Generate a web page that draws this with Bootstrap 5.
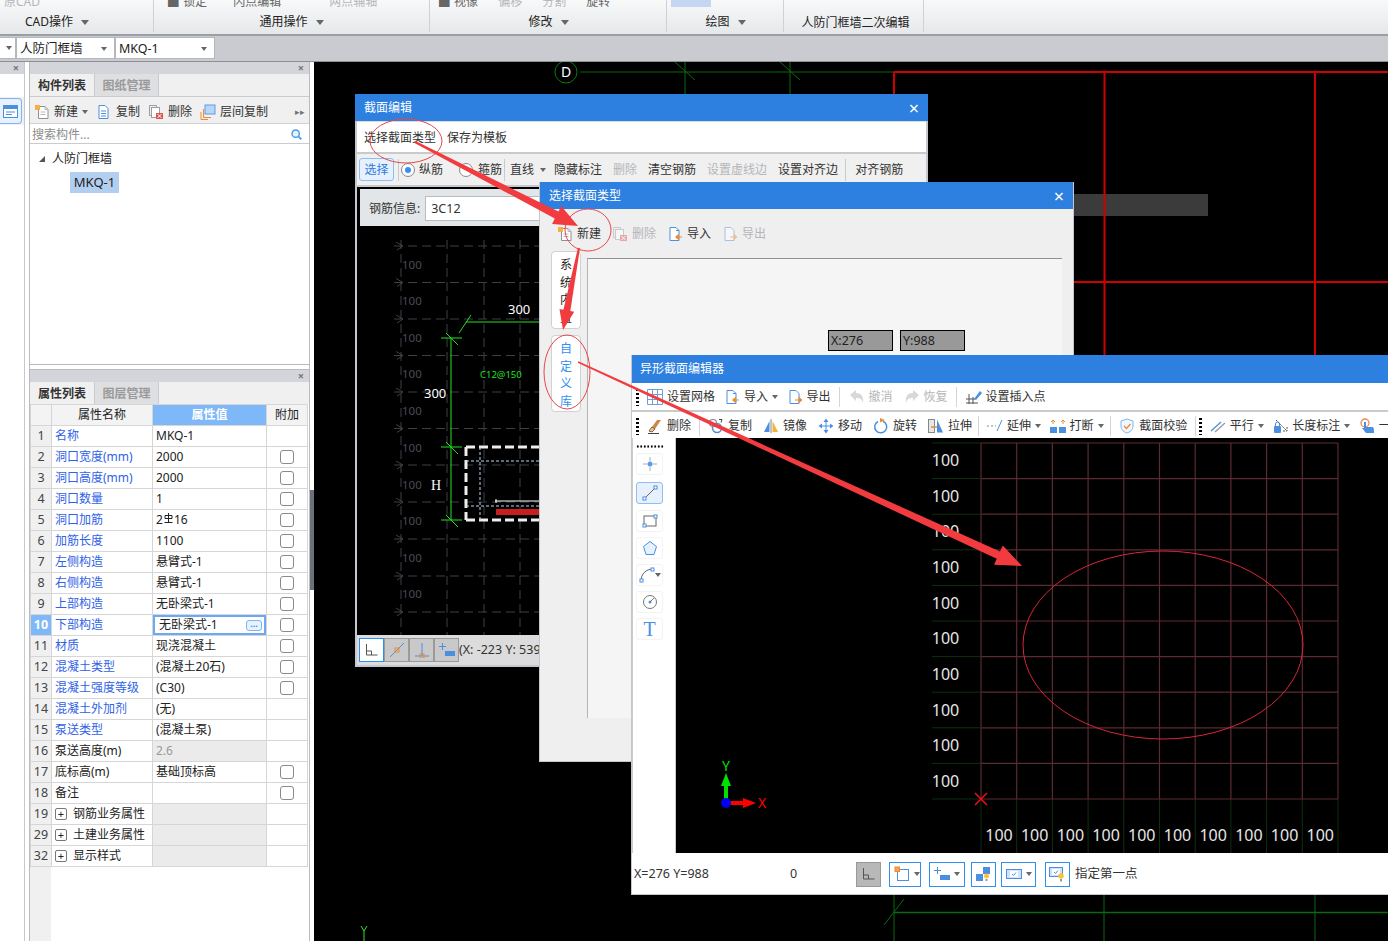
<!DOCTYPE html>
<html lang="zh-CN">
<head>
<meta charset="UTF-8">
<title>人防门框墙</title>
<link rel="stylesheet" href="https://cdn.jsdelivr.net/npm/bootstrap@5.3.3/dist/css/bootstrap.min.css">
<style>
html,body{margin:0;height:941px;overflow:hidden}
body{position:relative;width:1388px;font:12px/16px "Noto Sans","Noto Sans CJK SC",sans-serif;color:#333;background:#fff}
svg{display:block;flex:none}
.ic{width:16px;height:16px}
.off{color:#b4b6b9}
.off .ic{opacity:.45}
.caret-d{width:0;height:0;border:3px solid transparent;border-top:4px solid #666;border-bottom:0;flex:none}

/* ribbon */
.ribbon{height:36px;background:linear-gradient(#f8f9f9,#e5e8ea);border-bottom:2px solid #9b9ea2;overflow:hidden}
.rb-group{height:32px;border-right:1px solid #cfd2d5;position:relative}
.rb-top{height:7px;overflow:hidden;align-items:flex-end;color:#666;white-space:nowrap}
.rb-top span{line-height:14px;margin-bottom:-2px}
.rb-top .t1{padding-left:14px}.rb-top .t2{padding-left:26px}.rb-top .t3{padding-left:48px}
.rb-top .t4{padding-left:9px}.rb-top .t5{padding-left:20px}
.rb-label{height:20px;color:#222;margin-top:5px}
.rb-label .caret-d{border-width:4px;border-top-width:5px;border-bottom-width:0}
.g1{width:154px}.g2{width:276px}.g3{width:237px}.g4{width:117px}.g5{width:140px}
.g1 .rb-label{padding-left:25px}
.g2 .rb-label{padding-left:0}
.g3 .rb-label{padding-left:1px}
.g4 .rb-label{padding-left:1px}
.g5 .rb-label{padding:2px 0 0 4px}
.tool-blue{width:40px;height:10px;background:#c5d7f0;margin-top:-3px}

/* selector bar */
.selbar{height:26px;background:#c9cbd0;border-bottom:1px solid #8c8f94;padding-top:1px}
.combo{height:22px;background:#fff;border:1px solid #b5b7bb;padding:1px 7px 0 3px;color:#222;font-size:12.5px}
.combo-a{width:16px;padding:0 3px 0 0;border-left:0}
.combo-b{width:99px}
.combo-c{width:100px}

/* left dock */
.dock{height:879px}
.strip{width:25px;border-right:1px solid #c6c8cb}
.dock-head{height:12px;background:#d3d5da;color:#777;font-size:11px;line-height:11px;text-align:right;padding-right:5px;font-weight:700}
.strip-btn{width:24px;height:28px;background:#eef0f2;margin-top:23px;padding-top:1px}
.strip-ico{width:22px;height:26px;border:1px solid #7eb5f5;border-left:0;border-radius:0 4px 4px 0;background:#e8f2fe}
.side{width:281px;margin-left:4px;border-left:1px solid #b9bbbe;border-right:1px solid #b9bbbe}
.tabs-row{height:23px;background:#f0f0f0;border-bottom:1px solid #c9cbce}
.tabs-row-2{height:22px;border-bottom:0}
.tab-on{width:64px;line-height:24px;text-align:center;font-weight:700;color:#333;background:#f0f0f0}
.tab-off{width:65px;line-height:24px;text-align:center;font-weight:700;color:#9a9a9a;background:#dedfe1;border-left:1px solid #c9cbce;border-right:1px solid #c9cbce}
.list-tools{height:27px;background:#f0f0f0;border-bottom:1px solid #d0d2d4;padding:3px 0 0 4px;gap:8px}
.tool{display:flex;align-items:center;gap:4px;white-space:nowrap}
.more-mark{font-size:9px}
.search-row{height:20px;border-bottom:1px solid #c9cbce;padding:2px 6px 0 2px;color:#8d8d8d}
.tree{height:221px;border-bottom:1px solid #b9bbbe;padding-top:4px;color:#222}
.tree-root{height:22px}
.tree-tri{width:0;height:0;border-bottom:6px solid #555;border-left:6px solid transparent;margin:0 7px 0 9px}
.tree-leaf{width:49px;height:21px;line-height:20px;background:#b3cff0;text-align:center;margin:2px 0 0 40px;font-size:13px}
.dock-gap{height:5px;border-bottom:1px solid #b9bbbe}
.split{width:4px;background:#fff}
.split-handle{height:100px;margin-top:428px;background:#6c7079}

/* property grid */
.prop-grid{width:277px;table-layout:fixed;border-color:#d6d6d6;margin:0;font-size:12px;color:#222}
.prop-grid .c-num{width:21px}.prop-grid .c-name{width:101px}.prop-grid .c-val{width:114px}.prop-grid .c-add{width:41px}
.prop-grid td,.prop-grid th{height:21px;padding:0 3px;line-height:20px;white-space:nowrap;overflow:hidden;font-weight:400;vertical-align:middle;border-color:#d6d6d6}
.prop-grid th{text-align:center;background:#f3f3f3}
.prop-grid td.num{background:#f0f0f0;text-align:center;padding:0;color:#444;font-size:12.5px}
.prop-grid th.val-head{background:#7eb8f8;color:#fff;font-weight:700}
.prop-grid td.num-on{background:#7eb8f8;color:#fff;font-weight:700}
.prop-grid .link-name{color:#2f62e6}
.prop-grid td.val-gray{background:#ebebeb;color:#999}
.prop-grid td.val-edit{padding:0}
.val-box{height:20px;padding:0 4px 0 6px;box-shadow:inset 0 0 0 2px #6aaaf5}
.dots-btn{width:16px;height:11px;border:1px solid #7eb5f5;border-radius:3px;background:#e8f2fe;color:#4a8fe0;font-size:9px;line-height:6px;text-align:center;font-weight:700}
.prop-grid .form-check-input{width:14px;height:14px;margin:3px 0 0;border:1px solid #8a8a8a;border-radius:3px;float:none}
.plus-box{width:12px;height:12px;border:1px solid #777;border-radius:2px;font-size:11px;line-height:10px;text-align:center;margin:0 6px 0 0;flex:none}
.steel{display:inline-block;vertical-align:1px;margin:0 1px}
.grid-tail{height:80px;width:21px;background:#f0f0f0}

/* cad */
.cad{flex:1;background:#000;position:relative;overflow:hidden}
.cad-bg{position:absolute;left:0;top:0}

/* floating windows */
.win{position:absolute;display:flex;flex-direction:column;background:#efefef;border:1px solid #c5c8cf;border-top:0}
.win-1{left:355px;top:94px;width:573px;height:573px;z-index:2;border-width:0 2px 2px 2px}
.win-2{left:539px;top:182px;width:535px;height:580px;z-index:3}
.win-3{left:631px;top:355px;width:757px;height:540px;z-index:4;border-right:0}
.win-title{height:27px;background:#2d7fe0;color:#fff;padding:0 9px;flex:none;font-size:12px}
.win-1 .win-title{margin:0 -2px}
.win-3 .win-title{height:28px;padding-left:8px}
.win-close{font-size:18px;color:#fff}
.bar-white{background:#fff;flex:none;border-bottom:2px solid #c8cacc}
.w1-bar1{height:33px;padding:1px 0 0 7px;gap:11px;border-top:1px solid #ddd;color:#333}
.w1-bar2{height:33px;background:#f0f0f0;padding-left:2px;border-bottom:2px solid #c8cacc;flex:none;color:#333}
.w1-bar2 .m2{margin-left:2px}.w1-bar2 .m4{margin-left:4px}.w1-bar2 .m5{margin-left:5px}.w1-bar2 .m16{margin-left:16px}
.w1-bar2 .m6{margin-left:6px}.w1-bar2 .m7{margin-left:7px}.w1-bar2 .m8{margin-left:8px}.w1-bar2 .m9{margin-left:9px}.w1-bar2 .m11{margin-left:11px}
.sel-btn{width:35px;height:23px;line-height:21px;text-align:center;color:#2f7be0;border:1px solid #8dbdf3;border-radius:3px;background:#e6f1fd}
.sep{width:1px;height:22px;background:#c8cacc;flex:none}
.radio-dot{width:14px;height:14px;border-radius:50%;border:1px solid #888;background:#fff;flex:none;position:relative}
.radio-on::after{content:"";position:absolute;left:3px;top:3px;width:6px;height:6px;border-radius:50%;background:#3b8cf0}
.info-wrap{background:#000;padding:2px 0 0 3px;flex:none;height:39px}
.info-bar{height:37px;background:#e2e6e8;padding:2px 0 0 9px;gap:5px;color:#333}
.info-input{width:200px;height:25px;line-height:23px;background:#fff;border:1px solid #b9bbbe;padding-left:5px;font-size:12.5px}
.w1-canvas{height:409px;background:#000;flex:none;overflow:hidden}
.w1-status{height:30px;background:#dcdcdc;padding-left:2px;flex:none;font-size:12.5px;white-space:nowrap;overflow:hidden}
.st-btn{width:25px;height:24px;background:#c9c9c9;border:1px solid #9a9a9a;flex:none}
.st-on{background:#fff;border:1px solid #2f8ff0}

.w2-tools{height:49px;padding-left:17px;gap:11px;flex:none}
.w2-main{flex:1;padding-left:11px;gap:6px;min-height:0}
.side-tabs{width:30px;gap:6px;margin-top:-7px}
.side-tab{border:1px solid #cfd1d3;border-radius:4px;background:#fff;height:78px;text-align:center;line-height:17.5px;padding-top:4px;overflow:hidden;color:#222}
.side-tab-on{color:#2f8ff0;height:77px}
.w2-pane{width:475px;height:460px;background:#f5f5f5;border-top:1px solid #8d9198;border-left:1px solid #b4b6ba}
.coord-row{padding:71px 0 0 240px;gap:7px}
.coord{width:65px;height:21px;line-height:19px;background:#999;border:1px solid #000;padding-left:2px;color:#222;font-size:12.5px}

.w3-bar{height:29px;padding:1px 0 0 4px;color:#333}
.w3-bar-2{height:26px;border-bottom:0}
.tb-btn{display:flex;align-items:center;gap:4px;padding:0 5.5px;white-space:nowrap}
.tb-btn .caret-d{margin-right:-2.5px}
.tb-tight{margin-right:-2px}
.tb-sep{width:1px;height:20px;background:#d3d5d7;flex:none;margin:0 2.500px}
.tb-sep-wide{margin:0 3px}
.tb-dots{width:3px;height:18px;flex:none;background:radial-gradient(circle,#000 1.4px,transparent 1.5px) 0 0/3px 4px repeat-y;margin-right:2.500px}
.w3-main{height:415px;flex:none}
.w3-tools{width:44px;background:#fff;border-left:1px solid #c8cacc;border-right:1px solid #c8cacc;padding:7px 0 0 3px;gap:5px}
.drag-dots{width:28px;height:3px;background:radial-gradient(circle,#000 1px,transparent 1.2px) 0 0/3.5px 3px repeat-x}
.pick{width:27px;height:22px;border:1px solid #f3f3f3;border-radius:3px}
.pick-on{background:#e6f1fd;border-color:#8dbdf3;margin:2px 0 1px}
.pick-t{font:20px/20px "Liberation Serif",serif;color:#4a8fe0}
.w3-canvas{flex:1;background:#000;overflow:hidden}
.w3-status{flex:1;background:#fff;padding:1px 0 0 2px;color:#333;font-size:12.5px}
.s-num{width:156px}
.s-zero{width:66px}
.s-btn{height:25px;border:1px solid #2f8ff0;background:#fff;flex:none;padding:0 4px}
.s-btn-grey{background:#b8b8b8;border-color:#999;width:25px;margin-right:8px}
.s-a{width:32px;margin-right:8px}
.s-b{width:36px;margin-right:6px}
.s-c{width:25px;padding:0 3px;margin-right:5px}
.s-d{width:35px;margin-right:9px}
.s-e{width:25px;padding:0 3px;margin-right:5px}
.overlay{position:absolute;left:0;top:0;z-index:9;pointer-events:none}
</style>
</head>
<body>

<svg width="0" height="0" class="position-absolute">
  <symbol id="i-new" viewBox="0 0 16 16"><path d="M4.500 2.500h6.500l3 3v9h-9.500z" fill="#fff" stroke="#8c9196"/><path d="M11 2.500v3h3M6.500 8h5M6.500 10.500h5" fill="none" stroke="#b5b8bb"/><rect x="1" y="1" width="5" height="5" fill="#f5b042"/></symbol>
  <symbol id="i-copy" viewBox="0 0 16 16"><path d="M3 1.500h6l3 3v10H3z" fill="#fff" stroke="#4a8fe0"/><path d="M5 7h5M5 9.500h5M5 12h5" stroke="#4a8fe0"/></symbol>
  <symbol id="i-del" viewBox="0 0 16 16"><path d="M1.500 1.500h7v2M1.500 1.500v10h2" fill="none" stroke="#9a9ea2"/><rect x="3.500" y="3.500" width="8" height="10" fill="#fff" stroke="#9a9ea2"/><rect x="8" y="9" width="7" height="6" fill="#d9534f"/><path d="M9.500 10l4 4M13.500 10l-4 4" stroke="#fff"/></symbol>
  <symbol id="i-floor" viewBox="0 0 16 16"><rect x="5" y="1" width="10" height="9" fill="#b9d6f7" stroke="#5a9be6"/><path d="M3.500 5v8.500H11M1 8v7.500h7" fill="none" stroke="#ee8a2f"/></symbol>
  <symbol id="i-import" viewBox="0 0 16 16"><path d="M3 1.500h6l3 3v10H3z" fill="#fff" stroke="#4a8fe0"/><path d="M9 4.500h3" stroke="#4a8fe0"/><path d="M15 11H9M11.500 8.500L8.500 11l3 2.500z" stroke="#ee8a2f" fill="#ee8a2f"/></symbol>
  <symbol id="i-export" viewBox="0 0 16 16"><path d="M3 1.500h6l3 3v10H3z" fill="#fff" stroke="#4a8fe0"/><path d="M8 11h5M12 8.500l3 2.500-3 2.500z" stroke="#ee8a2f" fill="#ee8a2f"/></symbol>
  <symbol id="i-grid" viewBox="0 0 16 16"><path d="M.5.500h15v15H.5zM5.500.500v15M10.500.500v15M.5 5.500h15M.5 10.500h15" fill="none" stroke="#6a9fdc"/></symbol>
  <symbol id="i-undo" viewBox="0 0 16 16"><path d="M1 6l6-5v3c5 0 8 3 7 10-1-4-3-5-7-5v3z" fill="#a8abae"/></symbol>
  <symbol id="i-redo" viewBox="0 0 16 16"><path d="M15 6L9 1v3c-5 0-8 3-7 10 1-4 3-5 7-5v3z" fill="#a8abae"/></symbol>
  <symbol id="i-ins" viewBox="0 0 16 16"><path d="M3 5v10M7 8v7M0 10h9M0 14h12" stroke="#555"/><path d="M8 10l6-8 2 2-6 7z" fill="#4a8fe0"/></symbol>
  <symbol id="i-erase" viewBox="0 0 16 16"><path d="M10 2l4 0-6 9-3-2z" fill="#c98a4a"/><path d="M5 9l3 2-3 3-3-1z" fill="#e9c9a5" stroke="#8a5a2a"/><path d="M1 15.500h11" stroke="#444"/></symbol>
  <symbol id="i-chain" viewBox="0 0 16 16"><circle cx="9" cy="10" r="4.500" fill="none" stroke="#4a8fe0" stroke-width="1.500"/><circle cx="5" cy="5" r="3.500" fill="none" stroke="#888" stroke-width="1.200"/><path d="M11 1.500h3l-1 3" fill="none" stroke="#444"/></symbol>
  <symbol id="i-mirror" viewBox="0 0 16 16"><path d="M6.500 3L1 14h5.500z" fill="#4a8fe0"/><path d="M9.500 3L15 14H9.500z" fill="#f2b233"/><path d="M8 1v14" stroke="#888"/></symbol>
  <symbol id="i-move" viewBox="0 0 16 16"><path d="M8 3v10M3 8h10" stroke="#4a8fe0"/><path d="M8 .5L5.500 4h5zM8 15.500L5.500 12h5zM.5 8L4 5.500v5zM15.500 8L12 5.500v5z" fill="#4a8fe0"/></symbol>
  <symbol id="i-rotate" viewBox="0 0 16 16"><path d="M10 3.300A6 6 0 1 1 5 3.500" fill="none" stroke="#4a8fe0" stroke-width="1.500"/><path d="M7 0l5 2-5 2.500z" fill="#ee8a2f"/></symbol>
  <symbol id="i-stretch" viewBox="0 0 16 16"><rect x=".5" y="1.500" width="6" height="13" fill="#e4e6e8" stroke="#888"/><path d="M9 1.500l6 13H9z" fill="#4a8fe0"/><path d="M3 9h6" stroke="#ee8a2f" stroke-width="1.500"/></symbol>
  <symbol id="i-extend" viewBox="0 0 16 16"><path d="M0 8h9" stroke="#888" stroke-dasharray="2 2"/><path d="M10 13L15 2" stroke="#4a8fe0"/></symbol>
  <symbol id="i-break" viewBox="0 0 16 16"><rect x="0" y="9" width="7" height="6" fill="#4a8fe0"/><rect x="9" y="9" width="7" height="6" fill="#4a8fe0"/><path d="M3 6V2M13 6V2M1 4l2-2 2 2M11 4l2-2 2 2" fill="none" stroke="#ee8a2f"/></symbol>
  <symbol id="i-shield" viewBox="0 0 16 16"><path d="M8 1l6 2v5c0 4-3 6-6 7-3-1-6-3-6-7V3z" fill="#f4f8fd" stroke="#7eb5f5"/><path d="M5 8l2.500 2.500L11.500 6" fill="none" stroke="#ee8a2f" stroke-width="1.300"/></symbol>
  <symbol id="i-par" viewBox="0 0 16 16"><path d="M1 13L11 4" stroke="#4a8fe0" stroke-width="1.300"/><path d="M5 14L15 5" stroke="#999" stroke-width="1.300"/></symbol>
  <symbol id="i-len" viewBox="0 0 16 16"><rect x="2" y="8" width="7" height="7" rx="1" fill="#4a8fe0"/><path d="M3.500 8V6a2 2 0 0 1 4 0v2" fill="none" stroke="#4a8fe0"/><path d="M4 2l11 11M11 13l4 0 0-4" fill="none" stroke="#555" stroke-dasharray="2 1"/></symbol>
  <symbol id="i-hand" viewBox="0 0 16 16"><circle cx="6" cy="5" r="4" fill="none" stroke="#ee8a5f" stroke-width="1.300"/><path d="M5 4h2v5h6c2 0 2 2 2 6H7L3 10h2z" fill="#4a8fe0"/></symbol>
  <symbol id="i-search" viewBox="0 0 16 16"><circle cx="7" cy="7" r="4.500" fill="#e6f1fd" stroke="#4a9be6" stroke-width="1.800"/><path d="M10.500 10.500L14 14" stroke="#4a9be6" stroke-width="2.200"/></symbol>
  <symbol id="i-ortho" viewBox="0 0 16 16"><path d="M2.500 2v11h11M2.500 9h5v4" fill="none" stroke="#555"/></symbol>
  <symbol id="i-snap" viewBox="0 0 16 16"><rect x="3.500" y="3.500" width="11" height="11" fill="none" stroke="#4a8fe0"/><rect x="1" y="1" width="4.500" height="4.500" fill="#f2a25b" stroke="#ee8a2f"/></symbol>
  <symbol id="i-plusbar" viewBox="0 0 16 16"><path d="M3.500 1v7M0 4.500h7" stroke="#4a8fe0"/><rect x="6" y="9" width="10" height="5" fill="#4a8fe0"/></symbol>
  <symbol id="i-bulb" viewBox="0 0 16 16"><rect x="1" y="8" width="7" height="7" fill="#4a8fe0"/><rect x="8" y="1" width="7" height="7" fill="#4a8fe0"/><circle cx="11.500" cy="10" r="2.500" fill="#f5c542"/><path d="M10.500 13h2v2h-2z" fill="#999"/></symbol>
  <symbol id="i-form" viewBox="0 0 16 16"><rect x=".5" y="3.500" width="15" height="9" fill="#cfe2f8" stroke="#4a8fe0"/><rect x="4" y="5" width="8" height="6" fill="#fff"/><path d="M6 8l1.500 1.500L10 6.500" fill="none" stroke="#4a8fe0"/></symbol>
  <symbol id="i-formbulb" viewBox="0 0 16 16"><rect x=".5" y="1.500" width="13" height="9" fill="#cfe2f8" stroke="#4a8fe0"/><rect x="3" y="3" width="8" height="6" fill="#fff"/><path d="M5 6l1.500 1.500L9 4.500" fill="none" stroke="#4a8fe0"/><circle cx="12" cy="10" r="2.800" fill="#f5c542"/><path d="M11 13h2v2.500h-2z" fill="#999"/></symbol>
</svg>

<div class="d-flex flex-column">
  <!-- ribbon -->
  <div class="ribbon d-flex">
    <div class="rb-group g1">
      <div class="rb-top d-flex"><span class="ps-1 off">原CAD</span></div>
      <div class="rb-label d-flex align-items-center gap-2"><span>CAD操作</span><i class="caret-d"></i></div>
    </div>
    <div class="rb-group g2">
      <div class="rb-top d-flex"><span class="t1">▉ 锁定</span><span class="t2">闪点编辑</span><span class="off t3">两点辅轴</span></div>
      <div class="rb-label d-flex align-items-center justify-content-center gap-2"><span>通用操作</span><i class="caret-d"></i></div>
    </div>
    <div class="rb-group g3">
      <div class="rb-top d-flex"><span class="t4">▉ 视像</span><span class="off t5">偏移</span><span class="off t5">分割</span><span class="t5">旋转</span></div>
      <div class="rb-label d-flex align-items-center justify-content-center gap-2"><span>修改</span><i class="caret-d"></i></div>
    </div>
    <div class="rb-group g4">
      <div class="rb-top d-flex"><div class="tool-blue ms-1"></div></div>
      <div class="rb-label d-flex align-items-center justify-content-center gap-2"><span>绘图</span><i class="caret-d"></i></div>
    </div>
    <div class="rb-group g5">
      <div class="rb-top d-flex"></div>
      <div class="rb-label d-flex align-items-center justify-content-center"><span>人防门框墙二次编辑</span></div>
    </div>
  </div>

  <!-- selector bar -->
  <div class="selbar d-flex">
    <div class="combo combo-a d-flex align-items-center justify-content-end"><i class="caret-d"></i></div>
    <div class="combo combo-b d-flex align-items-center justify-content-between"><span>人防门框墙</span><i class="caret-d"></i></div>
    <div class="combo combo-c d-flex align-items-center justify-content-between"><span>MKQ-1</span><i class="caret-d"></i></div>
  </div>

  <!-- dock + drawing -->
  <div class="dock d-flex">
    <div class="strip">
      <div class="dock-head">×</div>
      <div class="strip-btn"><div class="strip-ico d-flex align-items-center justify-content-center">
        <svg width="15" height="13" viewBox="0 0 15 13"><rect x=".5" y=".5" width="14" height="12" fill="#fff" stroke="#4a8fe0"/><rect x=".5" y=".5" width="14" height="3.500" fill="#4a8fe0"/><path d="M3 7h9M3 9.500h6" stroke="#4a8fe0"/></svg>
      </div></div>
    </div>

    <div class="side">
      <div class="dock-head">×</div>
      <div class="tabs-row d-flex"><div class="tab-on">构件列表</div><div class="tab-off">图纸管理</div></div>
      <div class="list-tools d-flex align-items-center">
        <div class="tool"><svg class="ic"><use href="#i-new"/></svg>新建<i class="caret-d"></i></div>
        <div class="tool"><svg class="ic"><use href="#i-copy"/></svg>复制</div>
        <div class="tool"><svg class="ic"><use href="#i-del"/></svg>删除</div>
        <div class="tool"><svg class="ic"><use href="#i-floor"/></svg>层间复制</div>
        <div class="ms-auto pe-1 text-secondary more-mark">▸▸</div>
      </div>
      <div class="search-row d-flex align-items-center justify-content-between"><span>搜索构件...</span><svg width="13" height="13"><use href="#i-search"/></svg></div>
      <div class="tree">
        <div class="tree-root d-flex align-items-center"><i class="tree-tri"></i>人防门框墙</div>
        <div class="tree-leaf">MKQ-1</div>
      </div>
      <div class="dock-gap"></div>
      <div class="dock-head">×</div>
      <div class="tabs-row tabs-row-2 d-flex"><div class="tab-on">属性列表</div><div class="tab-off">图层管理</div></div>
      <table class="table table-bordered prop-grid">
        <colgroup><col class="c-num"><col class="c-name"><col class="c-val"><col class="c-add"></colgroup>
        <thead><tr><th></th><th>属性名称</th><th class="val-head">属性值</th><th>附加</th></tr></thead>
        <tbody id="propRows"></tbody>
      </table>
      <div class="grid-tail"></div>
    </div>

    <div class="split"><div class="split-handle"></div></div>

    <div class="cad">
      <svg class="cad-bg" width="1074" height="879" viewBox="314 62 1074 879" font-family="Noto Sans,sans-serif">
        <path d="M580 72H894M685 62V94M790 62V94M675 62l20 18M780 62l20 18" stroke="#0b6b0b" fill="none"/>
        <rect x="1074" y="194" width="134" height="22" fill="#3b3b3b"/>
        <path d="M894 72H1388M894 72V94M1104.500 72V355M1315 72V355M1074 282H1388" stroke="#d00000" stroke-width="2" fill="none"/>
        <circle cx="566" cy="72" r="11" fill="#000" stroke="#0b7a0b"/>
        <text x="566" y="77" fill="#fff" font-size="14" text-anchor="middle">D</text>
        <path d="M894 895V941M1104 895V941M1315 895V941M884 925l20-26" stroke="#0a6b0a" fill="none"/>
        <path d="M894 912.500H1388" stroke="#0a6b0a" stroke-width="1.500"/>
        <path d="M361 926l3 5 3-5M364 931v10" stroke="#2fe02f" fill="none"/>
      </svg>
    </div>
  </div>
</div>

<!-- 截面编辑 -->
<div class="win win-1">
  <div class="win-title d-flex align-items-center justify-content-between"><span>截面编辑</span><span class="win-close">×</span></div>
  <div class="w1-bar1 bar-white d-flex align-items-center"><span>选择截面类型</span><span>保存为模板</span></div>
  <div class="w1-bar2 d-flex align-items-center">
    <div class="sel-btn">选择</div><div class="sep ms-1"></div>
    <div class="radio-dot radio-on m2"></div><span class="m4">纵筋</span>
    <div class="radio-dot m16"></div><span class="m5">箍筋</span><div class="sep m2"></div>
    <span class="m5">直线</span><i class="caret-d m6"></i>
    <span class="m8">隐藏标注</span><span class="off m11">删除</span><span class="m11">清空钢筋</span><span class="off m11">设置虚线边</span><span class="m11">设置对齐边</span><div class="sep m7"></div><span class="m9">对齐钢筋</span>
  </div>
  <div class="info-wrap"><div class="info-bar d-flex align-items-center"><span>钢筋信息:</span><div class="info-input">3C12</div></div></div>
  <div class="w1-canvas"><svg width="569" height="409" viewBox="357 226 569 409" id="w1Svg" font-family="Noto Sans,sans-serif"></svg></div>
  <div class="w1-status d-flex align-items-center">
    <div class="st-btn st-on d-flex align-items-center justify-content-center"><svg class="ic"><use href="#i-ortho"/></svg></div>
    <div class="st-btn d-flex align-items-center justify-content-center"><svg class="ic" viewBox="0 0 16 16"><path d="M1 15L15 1" stroke="#4a8fe0"/><rect x="6" y="6" width="4" height="4" fill="none" stroke="#ee8a2f"/></svg></div>
    <div class="st-btn d-flex align-items-center justify-content-center"><svg class="ic" viewBox="0 0 16 16"><path d="M8 1v13M1 14h14" stroke="#4a8fe0"/><rect x="6" y="12" width="4" height="4" fill="none" stroke="#ee8a2f"/></svg></div>
    <div class="st-btn d-flex align-items-center justify-content-center"><svg class="ic"><use href="#i-plusbar"/></svg></div>
    <span>(X: -223 Y: 539)</span>
  </div>
</div>

<!-- 选择截面类型 -->
<div class="win win-2">
  <div class="win-title d-flex align-items-center justify-content-between"><span>选择截面类型</span><span class="win-close">×</span></div>
  <div class="w2-tools d-flex align-items-center">
    <div class="tool"><svg class="ic"><use href="#i-new"/></svg>新建</div>
    <div class="tool off"><svg class="ic"><use href="#i-del"/></svg>删除</div>
    <div class="tool"><svg class="ic"><use href="#i-import"/></svg>导入</div>
    <div class="tool off"><svg class="ic"><use href="#i-export"/></svg>导出</div>
  </div>
  <div class="w2-main d-flex">
    <div class="side-tabs d-flex flex-column">
      <div class="side-tab">系<br>统<br>内<br>置</div>
      <div class="side-tab side-tab-on">自<br>定<br>义<br>库</div>
    </div>
    <div class="w2-pane">
      <div class="coord-row d-flex"><div class="coord">X:276</div><div class="coord">Y:988</div></div>
    </div>
  </div>
</div>

<!-- 异形截面编辑器 -->
<div class="win win-3 bg-white">
  <div class="win-title d-flex align-items-center"><span>异形截面编辑器</span></div>
  <div class="w3-bar bar-white d-flex align-items-center">
    <i class="tb-dots"></i>
    <div class="tb-btn tb-tight"><svg class="ic"><use href="#i-grid"/></svg>设置网格</div>
    <div class="tb-btn"><svg class="ic"><use href="#i-import"/></svg>导入<i class="caret-d"></i></div>
    <div class="tb-btn"><svg class="ic"><use href="#i-export"/></svg>导出</div>
    <div class="tb-sep tb-sep-wide"></div>
    <div class="tb-btn off"><svg class="ic"><use href="#i-undo"/></svg>撤消</div>
    <div class="tb-btn off"><svg class="ic"><use href="#i-redo"/></svg>恢复</div>
    <div class="tb-sep tb-sep-wide"></div>
    <div class="tb-btn"><svg class="ic"><use href="#i-ins"/></svg>设置插入点</div>
  </div>
  <div class="w3-bar w3-bar-2 bar-white d-flex align-items-center">
    <i class="tb-dots"></i>
    <div class="tb-btn"><svg class="ic"><use href="#i-erase"/></svg>删除</div>
    <div class="tb-sep"></div>
    <div class="tb-btn"><svg class="ic"><use href="#i-chain"/></svg>复制</div>
    <div class="tb-btn"><svg class="ic"><use href="#i-mirror"/></svg>镜像</div>
    <div class="tb-btn"><svg class="ic"><use href="#i-move"/></svg>移动</div>
    <div class="tb-btn"><svg class="ic"><use href="#i-rotate"/></svg>旋转</div>
    <div class="tb-btn tb-tight"><svg class="ic"><use href="#i-stretch"/></svg>拉伸</div>
    <div class="tb-sep"></div>
    <div class="tb-btn"><svg class="ic"><use href="#i-extend"/></svg>延伸<i class="caret-d"></i></div>
    <div class="tb-btn"><svg class="ic"><use href="#i-break"/></svg>打断<i class="caret-d"></i></div>
    <div class="tb-sep tb-sep-wide"></div>
    <div class="tb-btn"><svg class="ic"><use href="#i-shield"/></svg>截面校验</div>
    <div class="tb-sep"></div>
    <i class="tb-dots"></i>
    <div class="tb-btn"><svg class="ic"><use href="#i-par"/></svg>平行<i class="caret-d"></i></div>
    <div class="tb-btn"><svg class="ic"><use href="#i-len"/></svg>长度标注<i class="caret-d"></i></div>
    <div class="tb-btn"><svg class="ic"><use href="#i-hand"/></svg>一</div>
  </div>
  <div class="w3-main d-flex">
    <div class="w3-tools d-flex flex-column">
      <div class="drag-dots"></div>
      <div class="pick d-flex align-items-center justify-content-center"><svg class="ic" viewBox="0 0 16 16"><circle cx="8" cy="8" r="2.500" fill="#5b9be6"/><path d="M8 1v4M8 11v4M1 8h4M11 8h4" stroke="#a8abae"/></svg></div>
      <div class="pick pick-on d-flex align-items-center justify-content-center"><svg class="ic" viewBox="0 0 16 16"><path d="M2 14L14 2" stroke="#666"/><rect x="12" y="1" width="3" height="3" fill="#fff" stroke="#4a8fe0"/><rect x="1" y="12" width="3" height="3" fill="#fff" stroke="#4a8fe0"/></svg></div>
      <div class="pick d-flex align-items-center justify-content-center"><svg class="ic" viewBox="0 0 16 16"><rect x="2" y="3" width="12" height="10" fill="none" stroke="#666"/><rect x="1" y="11" width="3" height="3" fill="#fff" stroke="#4a8fe0"/><rect x="12" y="2" width="3" height="3" fill="#fff" stroke="#4a8fe0"/></svg></div>
      <div class="pick d-flex align-items-center justify-content-center"><svg class="ic" viewBox="0 0 16 16"><path d="M8 1.500l6.500 5-2.500 8H4l-2.500-8z" fill="#e6f1fd" stroke="#4a8fe0"/></svg></div>
      <div class="pick d-flex align-items-center justify-content-center"><svg class="ic" viewBox="0 0 16 16"><path d="M2 14C2 7 7 2 14 2" fill="none" stroke="#666"/><rect x="1" y="12" width="3" height="3" fill="#fff" stroke="#4a8fe0"/><rect x="12" y="1" width="3" height="3" fill="#fff" stroke="#4a8fe0"/></svg><i class="caret-d"></i></div>
      <div class="pick d-flex align-items-center justify-content-center"><svg class="ic" viewBox="0 0 16 16"><circle cx="8" cy="8" r="6.500" fill="none" stroke="#777"/><circle cx="8" cy="8" r="1.500" fill="#4a8fe0"/><path d="M8 8l4-4" stroke="#777"/></svg></div>
      <div class="pick pick-t d-flex align-items-center justify-content-center">T</div>
    </div>
    <div class="w3-canvas"><svg width="712" height="415" viewBox="676 438 712 415" id="w3Svg" font-family="Noto Sans,sans-serif"></svg></div>
  </div>
  <div class="w3-status d-flex align-items-center">
    <span class="s-num">X=276 Y=988</span><span class="s-zero">0</span>
    <div class="s-btn s-btn-grey d-flex align-items-center justify-content-center"><svg class="ic"><use href="#i-ortho"/></svg></div>
    <div class="s-btn s-a d-flex align-items-center gap-1"><svg class="ic"><use href="#i-snap"/></svg><i class="caret-d"></i></div>
    <div class="s-btn s-b d-flex align-items-center gap-1"><svg class="ic"><use href="#i-plusbar"/></svg><i class="caret-d"></i></div>
    <div class="s-btn s-c d-flex align-items-center"><svg class="ic"><use href="#i-bulb"/></svg></div>
    <div class="s-btn s-d d-flex align-items-center gap-1"><svg class="ic"><use href="#i-form"/></svg><i class="caret-d"></i></div>
    <div class="s-btn s-e d-flex align-items-center"><svg class="ic"><use href="#i-formbulb"/></svg></div>
    <span>指定第一点</span>
  </div>
</div>

<!-- 教程标注：箭头和圈 -->
<svg class="overlay" width="1388" height="941" id="overlay">
  <g fill="none" stroke="#e8474c">
    <ellipse cx="406" cy="141" rx="36" ry="22"/>
    <ellipse cx="588" cy="230" rx="23" ry="21"/>
    <ellipse cx="567" cy="372" rx="23" ry="37"/>
  </g>
</svg>

<script>
const propRows = document.querySelector('#propRows');
const steel = '<svg class="steel" width="9" height="10" viewBox="0 0 9 10"><path d="M1 2.500h7v3H1zM4.500 0v9M.5 9.500h8" fill="none" stroke="#222"/></svg>';
const rows = [
  [1,'名称','MKQ-1',1,0],[2,'洞口宽度(mm)','2000',1,1],[3,'洞口高度(mm)','2000',1,1],[4,'洞口数量','1',1,1],
  [5,'洞口加筋','2' + steel + '16',1,1],[6,'加筋长度','1100',1,1],[7,'左侧构造','悬臂式-1',1,1],[8,'右侧构造','悬臂式-1',1,1],
  [9,'上部构造','无卧梁式-1',1,1],[10,'下部构造','无卧梁式-1',1,1],[11,'材质','现浇混凝土',1,1],[12,'混凝土类型','(混凝土20石)',1,1],
  [13,'混凝土强度等级','(C30)',1,1],[14,'混凝土外加剂','(无)',1,0],[15,'泵送类型','(混凝土泵)',1,0],[16,'泵送高度(m)','2.6',0,0],
  [17,'底标高(m)','基础顶标高',0,1],[18,'备注','',0,1]
];
let html = '';
for (let i = 0; i < rows.length; i++) {
  const r = rows[i];
  const selected = r[0] === 10;
  html += `<tr><td class="num${selected ? ' num-on' : ''}">${r[0]}</td>`;
  html += `<td class="${r[3] ? 'link-name' : ''}">${r[1]}</td>`;
  if (selected) {
    html += `<td class="val-edit"><div class="val-box d-flex align-items-center justify-content-between"><span>${r[2]}</span><div class="dots-btn">...</div></div></td>`;
  } else {
    html += `<td class="${r[0] === 16 ? 'val-gray' : ''}">${r[2]}</td>`;
  }
  html += `<td class="text-center">${r[4] ? '<input type="checkbox" class="form-check-input">' : ''}</td></tr>`;
}
const groups = [[19,'钢筋业务属性'],[29,'土建业务属性'],[32,'显示样式']];
groups.forEach(g => {
  html += `<tr><td class="num">${g[0]}</td><td><div class="d-flex align-items-center"><div class="plus-box">+</div>${g[1]}</div></td><td class="val-gray"></td><td></td></tr>`;
});
propRows.innerHTML = html;

// 截面编辑 canvas
let w1 = '';
[246,282.500,319,355.500,392,428.500,465,502,539,576,612].forEach(y => {
  w1 += `<path d="M394 ${y}H640" stroke="#3e4048" stroke-dasharray="9 5"/><path d="M396 ${y-4}l7 4-6 4" fill="none" stroke="#3e4048"/>`;
});
[401,447,484,520].forEach(x => {
  w1 += `<path d="M${x} 240V636" stroke="#3e4048" stroke-dasharray="9 5"/>`;
});
[265,301,338,374,411,448,485,521,558,594].forEach(y => {
  w1 += `<text x="402" y="${y+4}" fill="#4a4c54" font-size="11.500">100</text>`;
});
w1 += `<path d="M466 322H545M451 338V520M441 338H462M441 447H462M441 520H462" stroke="#22e022"/>
<path d="M459 333L471 315M446 333l12 12M446 442l12 12M446 515l12 12" stroke="#22e022"/>
<text x="508" y="314" fill="#fff" font-size="13">300</text><text x="424" y="398" fill="#fff" font-size="13">300</text>
<text x="480" y="378" fill="#22e022" font-size="9.500">C12@150</text>
<text x="431" y="490" fill="#fff" font-size="14" font-family="Liberation Serif,serif">H</text>
<path d="M466 447V520M466 447H545M466 520H545" stroke="#eee" stroke-width="3" stroke-dasharray="9 4" fill="none"/>
<path d="M480 447V520M466 461H545M466 506H545" stroke="#b9d6f0" stroke-dasharray="3 2" fill="none"/>
<path d="M495 501H545" stroke="#fff"/><path d="M496 499v4" stroke="#fff"/>
<rect x="496" y="509" width="49" height="6" fill="#c81e1e"/>`;
document.querySelector('#w1Svg').innerHTML = w1;

// 异形截面 canvas
let w3 = '';
for (let i = 0; i <= 10; i++) {
  const x = 981 + i * 35.700;
  const y = 443 + i * 35.600;
  w3 += `<path d="M932 ${y}H981M${x} 799V853" stroke="#0f2f0f"/>`;
  w3 += `<path d="M981 ${y}H1338M${x} 443V799" stroke="#5c2a31" stroke-width="1.200"/>`;
}
for (let i = 0; i < 10; i++) {
  w3 += `<text x="945.500" y="${466 + i * 35.650}" fill="#e6e6e6" font-size="16" text-anchor="middle">100</text>`;
  w3 += `<text x="${999 + i * 35.700}" y="841" fill="#e6e6e6" font-size="16" text-anchor="middle">100</text>`;
}
w3 += `<ellipse cx="1163" cy="645" rx="140" ry="94" fill="none" stroke="#d9263a"/>
<path d="M975 793l12 12M987 793l-12 12" stroke="#f01010" stroke-width="1.500"/>
<path d="M726 803V785" stroke="#00e000" stroke-width="4"/><path d="M726 773l-5 13h10z" fill="#00e000"/>
<path d="M726 803H745" stroke="#f00" stroke-width="4"/><path d="M756 803l-13-5v10z" fill="#f00"/>
<circle cx="726" cy="803" r="5" fill="#0000f0"/>
<text x="762" y="808" fill="#f00" font-size="14" text-anchor="middle">X</text>
<text x="726" y="771" fill="#00e000" font-size="14" text-anchor="middle">Y</text>`;
document.querySelector('#w3Svg').innerHTML = w3;

// 红色箭头，尾部细，头部粗
function arrowPoints(x1, y1, x2, y2, w1, w2, headLen, headW) {
  const len = Math.hypot(x2 - x1, y2 - y1);
  const ux = (x2 - x1) / len, uy = (y2 - y1) / len;
  const nx = -uy, ny = ux;
  const bx = x2 - ux * headLen, by = y2 - uy * headLen;
  const p = [
    [x1 + nx * w1 / 2, y1 + ny * w1 / 2], [bx + nx * w2 / 2, by + ny * w2 / 2],
    [bx + nx * headW / 2, by + ny * headW / 2], [x2, y2],
    [bx - nx * headW / 2, by - ny * headW / 2], [bx - nx * w2 / 2, by - ny * w2 / 2],
    [x1 - nx * w1 / 2, y1 - ny * w1 / 2]
  ];
  return p.map(a => a[0].toFixed(1) + ',' + a[1].toFixed(1)).join(' ');
}
const overlay = document.querySelector('#overlay');
let marks = overlay.innerHTML;
[[415,142,578,226,2,8,24,20],[579,248,563,330,2,7,20,15],[578,362,1022,566,1.500,8,26,21]].forEach(a => {
  marks += `<polygon points="${arrowPoints.apply(null, a)}" fill="#f23b3f"/>`;
});
overlay.innerHTML = marks;
</script>
<script src="https://cdn.jsdelivr.net/npm/bootstrap@5.3.3/dist/js/bootstrap.bundle.min.js"></script>
</body>
</html>
